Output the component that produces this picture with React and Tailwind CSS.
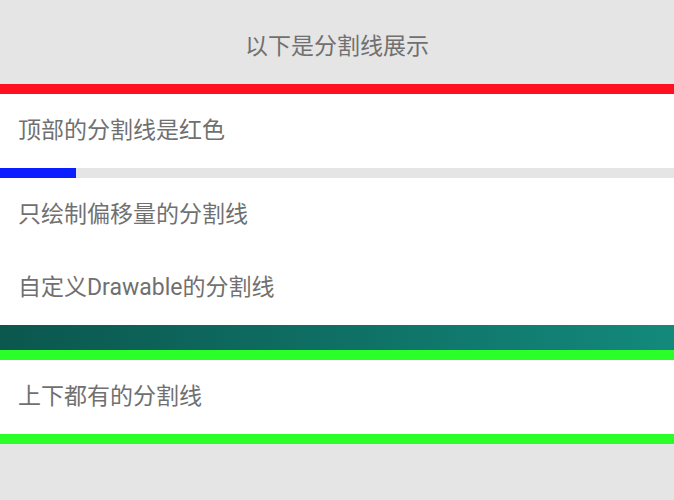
export default function App() {
  const font = { fontFamily: 'Roboto, "Noto Sans CJK SC", sans-serif' };

  return (
    <div className="w-[674px] h-[500px] bg-[#e5e5e5] flex flex-col" style={font}>
      {/* Title */}
      <div className="h-[84px] flex items-center justify-center text-[23px] text-[#707070] pt-[10px]">
        以下是分割线展示
      </div>

      {/* red top divider */}
      <div className="h-[10px] bg-[#ff1020]" />
      <div className="h-[74px] bg-white flex items-center px-[18px] text-[23px] text-[#707070]">
        顶部的分割线是红色
      </div>

      {/* offset divider */}
      <div className="h-[10px] flex">
        <div className="w-[76px] bg-[#0a1eff]" />
        <div className="flex-1 bg-[#e5e5e5]" />
      </div>
      <div className="h-[74px] bg-white flex items-center px-[18px] text-[23px] text-[#707070]">
        只绘制偏移量的分割线
      </div>
      <div className="h-[73px] bg-white flex items-center px-[18px] text-[23px] text-[#707070]">
        自定义Drawable的分割线
      </div>

      {/* drawable divider */}
      <div className="h-[25px] bg-gradient-to-r from-[#0b574e] to-[#13897c]" />

      <div className="h-[10px] bg-[#2aff2a]" />
      <div className="h-[74px] bg-white flex items-center px-[18px] text-[23px] text-[#707070]">
        上下都有的分割线
      </div>
      <div className="h-[10px] bg-[#2aff2a]" />
    </div>
  );
}
